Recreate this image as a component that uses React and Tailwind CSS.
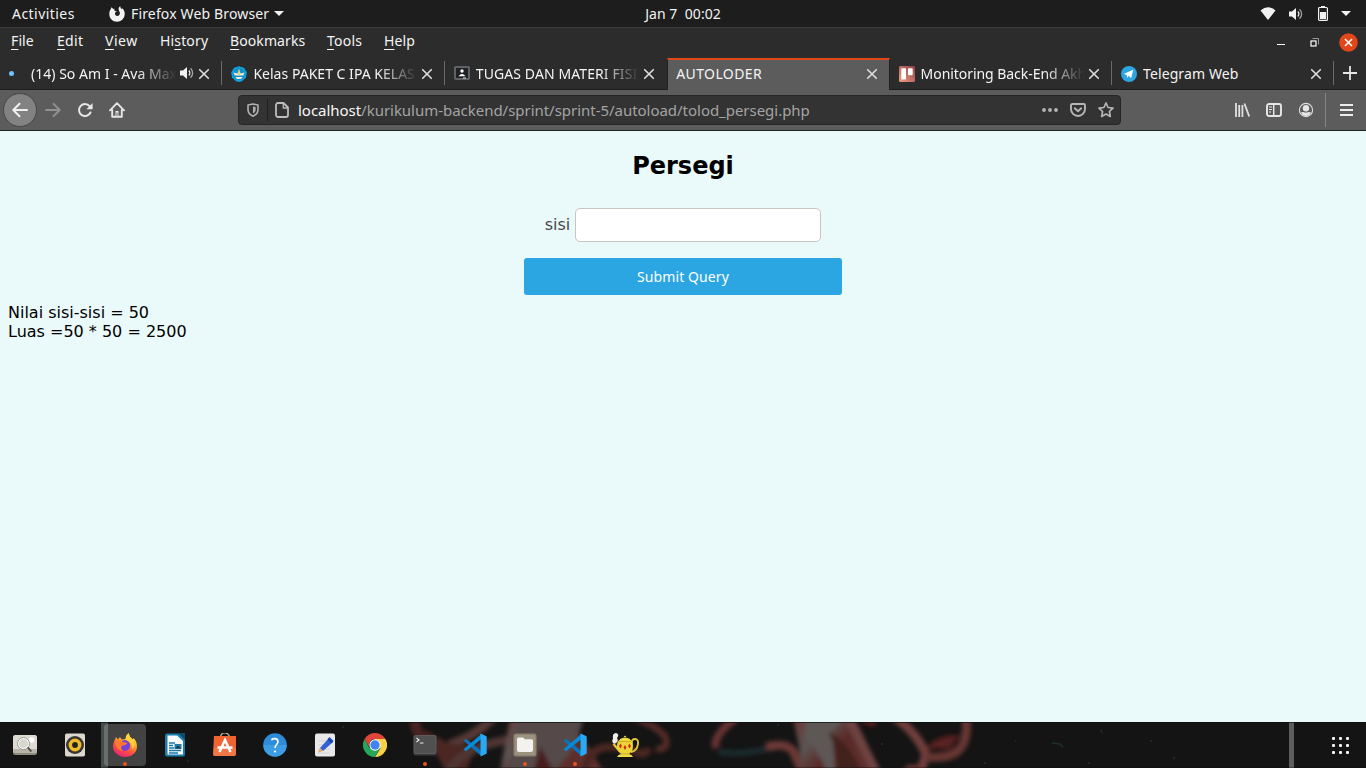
import React from "react";

function Close({ className = "" }) {
  return (
    <svg viewBox="0 0 12 12" className={"h-3 w-3 shrink-0 " + className} stroke="#dedede" strokeWidth="1.6" strokeLinecap="round">
      <path d="M1.7 1.7 10.3 10.3M10.3 1.7 1.7 10.3" />
    </svg>
  );
}

function Speaker({ className }) {
  return (
    <svg viewBox="0 0 16 16" className={className} fill="none" stroke="#e8e8e8">
      <path d="M1 5.500h3L8 2v12l-4-3.500H1z" fill="#f2f2f2" stroke="none" />
      <path d="M9.800 5.500a3.500 3.500 0 0 1 0 5" strokeWidth="1.300" />
      <path d="M11.500 3.200a6.500 6.500 0 0 1 0 9.600" strokeWidth="1.300" opacity=".65" />
    </svg>
  );
}

function TopBar() {
  return (
    <div className="grid h-7 grid-cols-3 items-center border-b border-[#3a3a3a] bg-[#1d1d1d] text-[14px] text-[#f2f2f2]">
      <div className="flex items-center pl-3">
        <span className="w-[97px] tracking-[0.45px]">Activities</span>
        <svg viewBox="0 0 16 16" className="mr-[6px] h-4 w-4">
          <path d="M2.300 1.200 4.400 3l1.300-.2C5 4 5.300 4.700 6 5.100l2 .5-1.900 1C5.600 8.700 6.700 10 8.200 10c1.700 0 2.800-1.300 2.700-2.900C10.800 5.500 9.700 4.900 9.600 3.200 9.600 2 10.200.9 11.200.300c.1 1.400 1 2.200 1.800 3 .1-.5 0-.8-.1-1.200C14.800 3.700 16 5.900 15.700 8.500 15.300 12.700 12.200 15.700 8 15.700 3.600 15.700.400 12.500.300 8.200.300 5.900 1 4.100 2 2.800z" fill="#f2f2f2" />
        </svg>
        <span className="whitespace-nowrap tracking-[0.15px]">Firefox Web Browser</span>
        <svg viewBox="0 0 10 5" className="ml-[5px] h-[5px] w-[10px]"><path d="M0 0h10L5 5z" fill="#f2f2f2" /></svg>
      </div>
      <div className="whitespace-pre text-center tracking-[0.05px]">Jan 7  00:02</div>
      <div className="flex items-center justify-end pr-[15px]">
        <svg viewBox="0 0 16 13" className="mr-3 h-[13px] w-4"><path d="M.5 3.500Q8-3 15.500 3.500L8 13z" fill="#f2f2f2" /></svg>
        <Speaker className="mr-[14px] h-4 w-4" />
        <svg viewBox="0 0 10 15" className="mr-[13px] h-[15px] w-[10px]">
          <path d="M3 0h4v1H3z" fill="#f2f2f2" />
          <rect x=".6" y="1.500" width="8.800" height="12.900" rx="1" fill="none" stroke="#f2f2f2" strokeWidth="1.200" />
          <path d="M2 6h6v7H2z" fill="#f2f2f2" />
        </svg>
        <svg viewBox="0 0 10 5" className="h-[5px] w-[10px]"><path d="M0 0h10L5 5z" fill="#f2f2f2" /></svg>
      </div>
    </div>
  );
}

const menus = [
  ["", "F", "ile", "w-[46px] tracking-[0.1px]"],
  ["", "E", "dit", "w-[48px] tracking-[0.3px]"],
  ["", "V", "iew", "w-[55px] tracking-[0.5px]"],
  ["Hi", "s", "tory", "w-[70px] tracking-[0.15px]"],
  ["", "B", "ookmarks", "w-[97px] tracking-[0.1px]"],
  ["", "T", "ools", "w-[57px] tracking-[0.25px]"],
  ["", "H", "elp", "w-[50px] tracking-[0.1px]"],
];

function MenuBar() {
  return (
    <div className="flex h-[29px] items-center pl-[11px] text-[14px] leading-5 text-[#f4f4f4]">
      {menus.map(([a, b, c, cls]) => (
        <span key={b + c} className={"-mt-[3px] shrink-0 " + cls}>
          {a}<span className="underline decoration-1 underline-offset-[3px]">{b}</span>{c}
        </span>
      ))}
      <div className="ml-auto flex items-center pr-2">
        <div className="mr-[25px] mt-1 h-px w-2 bg-white" />
        <svg viewBox="0 0 9 9" className="mr-[20px] h-[9px] w-[9px]" fill="none">
          <path d="M2.500 .5H8.500V6.500" stroke="#9b9b9b" />
          <rect x="1" y="3" width="5" height="5" stroke="#fff" strokeWidth="1.200" />
        </svg>
        <svg viewBox="0 0 19 19" className="h-[19px] w-[19px]">
          <circle cx="9.500" cy="9.500" r="9.300" fill="#e2471a" />
          <path d="m6 6 7 7M13 6l-7 7" stroke="#fff" strokeWidth="1.500" />
        </svg>
      </div>
    </div>
  );
}

const TabIcons = {
  kelas: (
    <svg viewBox="0 0 16 16" className="mt-px h-4 w-4 shrink-0">
      <path d="M8 .2 13 1.800 15.800 6.200 15 11.500 11 15.200 8 16 5 15.200 1 11.500.2 6.200 3 1.800z" fill="#12a0dc" />
      <circle cx="8" cy="8" r="6" fill="#0a91cf" />
      <path d="M2.500 6.500 6.300 7.500l1.700-3 1.700 3 3.800-1-1.200 3H3.700zM4.300 11h7.400L10 13H6z" fill="#f3ead1" />
      <path d="M7.300 3.500h1.400v6H7.300z" fill="#e6ca54" />
    </svg>
  ),
  tugas: (
    <svg viewBox="0 0 16 14" className="h-[14px] w-4 shrink-0">
      <rect x="1" y="1" width="14" height="12" rx=".7" fill="#202124" stroke="#5f6368" strokeWidth="2" />
      <circle cx="8" cy="5" r="1.700" fill="#fff" /><path d="M4.500 10.200Q8 6 11.500 10.200z" fill="#fff" />
      <path d="M9 11.500h3v1H9z" fill="#ddd" />
    </svg>
  ),
  trello: (
    <svg viewBox="0 0 16 16" className="mt-px h-4 w-4 shrink-0">
      <defs><linearGradient id="tr" x1="0" y1="1" x2="1" y2="0"><stop stopColor="#ef9c80" /><stop offset=".55" stopColor="#bd6a62" /><stop offset="1" stopColor="#933d43" /></linearGradient></defs>
      <rect width="16" height="16" rx="1.500" fill="url(#tr)" />
      <rect x="2.300" y="2.300" width="4.700" height="11.200" rx=".8" fill="#fff" /><rect x="9" y="2.300" width="4.700" height="7" rx=".8" fill="#fff" />
    </svg>
  ),
  telegram: (
    <svg viewBox="0 0 16 16" className="mt-px h-4 w-4 shrink-0">
      <circle cx="8" cy="8" r="8" fill="#2ca5e0" />
      <path d="m3 7.700 9.300-3.900-2.200 8.500-2.500-2.500-1.700 2.100-.1-2.700z" fill="#fff" />
    </svg>
  ),
};

function Tab({ icon, title, sound, active, sep = true, track }) {
  const fade = title.length > 13 ? " [mask-image:linear-gradient(to_right,#000_calc(100%-40px),transparent)]" : "";
  return (
    <div className={"flex h-full w-[222.4px] shrink-0 items-center text-[14px] text-[#f4f4f4] " + (active ? "-mb-px h-[33px] border-x border-t-2 border-x-[#222] border-t-[#e2471a] bg-[#5c5c5c] pb-[2px] pl-2" : "pl-[9px]")}>
      {icon}
      <span className={"min-w-0 flex-1 overflow-hidden whitespace-nowrap " + (icon ? "ml-[6px] " : "") + track + fade}>{title}</span>
      {sound && <Speaker className="ml-[2px] h-4 w-4 shrink-0" />}
      <Close className={active ? "mr-[10px]" : "ml-[3px] mr-[11px] mt-px"} />
      <div className={"h-6 w-px shrink-0 " + (sep ? "bg-[#6a6a6a]" : "bg-transparent")} />
    </div>
  );
}

function TabBar() {
  return (
    <div className="flex h-[33px] items-center border-b border-[#1d1d1d]">
      <Tab icon={<div className="mr-[11px] h-[5px] w-[5px] shrink-0 rounded-full bg-[#75bfff]" />} title="(14) So Am I - Ava Max" sound track="tracking-[0.02px]" />
      <Tab icon={TabIcons.kelas} title="Kelas PAKET C IPA KELAS" track="tracking-[0.02px]" />
      <Tab icon={TabIcons.tugas} title="TUGAS DAN MATERI FISI" sep={false} track="tracking-[0.1px]" />
      <Tab title="AUTOLODER" active sep={false} track="tracking-[0.4px]" />
      <Tab icon={TabIcons.trello} title="Monitoring Back-End Akh" track="tracking-[-0.05px]" />
      <Tab icon={TabIcons.telegram} title="Telegram Web" track="tracking-[0.12px]" />
      <svg viewBox="0 0 14 14" className="ml-[9px] h-[14px] w-[14px] shrink-0"><path d="M7 0v14M0 7h14" stroke="#e6e6e6" strokeWidth="1.800" /></svg>
    </div>
  );
}

function ToolBar() {
  return (
    <div className="flex h-[41px] items-center border-b border-[#222] bg-[#5c5c5c]">
      <div className="ml-[3px] flex h-[34px] w-[34px] items-center justify-center rounded-full border border-[#474747] bg-[#828282]">
        <svg viewBox="0 0 16 16" className="h-4 w-4" fill="none" stroke="#f0f0f0" strokeWidth="2" strokeLinecap="round" strokeLinejoin="round"><path d="M15 8H1.500M7.500 1.800 1.300 8l6.200 6.200" /></svg>
      </div>
      <svg viewBox="0 0 16 16" className="ml-2 h-4 w-4" fill="none" stroke="#929292" strokeWidth="1.900" strokeLinecap="round" strokeLinejoin="round"><path d="M1 8h13.500M8.500 1.800 14.700 8l-6.200 6.200" /></svg>
      <svg viewBox="0 0 16 16" className="ml-4 h-4 w-4" fill="none" stroke="#e6e6e6" strokeWidth="2"><path d="M13.500 10.500A6 6 0 1 1 12.600 4.200L14 5.800" strokeLinecap="round" /><path d="M15.600 1v6.200H9.400z" fill="#e6e6e6" stroke="none" /></svg>
      <svg viewBox="0 0 16 16" className="ml-4 h-4 w-4" fill="none" stroke="#e6e6e6" strokeWidth="1.900" strokeLinecap="round" strokeLinejoin="round"><path d="M1 8.300 8 1.200l7 7.100M3.200 8v6.800h9.600V8" /><path d="M6.500 14.500V9h3v5.500z" fill="#e6e6e6" stroke="none" /><path d="M8 11v2.500" stroke="#5c5c5c" strokeWidth="1" /></svg>

      <div className="ml-[113px] flex h-[30px] w-[883px] items-center rounded-[4px] border border-[#252525] bg-[#333]">
        <svg viewBox="0 0 12 14" className="ml-2 h-[14px] w-3" fill="none"><path d="M6 1 11 2v4.500c0 3.200-1.800 5.300-5 6.700-3.200-1.400-5-3.500-5-6.700V2z" stroke="#b0b0b0" strokeWidth="1.600" strokeLinejoin="round" /><path d="M6 3.700v6.700c-1.800-1-2.600-2.200-2.600-4V4.200z" fill="#333" /><path d="M6 3.500v7c1.800-1 2.600-2.200 2.600-4V4z" fill="#b0b0b0" /></svg>
        <div className="ml-2 h-[22px] w-px bg-[#1f1f1f]" />
        <svg viewBox="0 0 14 16" className="ml-[7px] h-4 w-[14px]" fill="none" stroke="#bdbdbd" strokeWidth="1.800" strokeLinejoin="round"><path d="M3 1h5.500L13 5.500V13a2 2 0 0 1-2 2H3a2 2 0 0 1-2-2V3a2 2 0 0 1 2-2z" /><path d="M8.300 1.300V6H13" strokeWidth="1.300" /></svg>
        <span className="ml-[9px] whitespace-nowrap text-[15px] tracking-[-0.03px] text-[#a4a4a4]"><span className="text-[#f8f8f8]">localhost</span>/kurikulum-backend/sprint/sprint-5/autoload/tolod_persegi.php</span>
        <div className="ml-auto flex items-center pr-[6px]">
          <svg viewBox="0 0 16 4" className="h-1 w-4" fill="#b6b6b6"><circle cx="2" cy="2" r="1.900" /><circle cx="8" cy="2" r="1.900" /><circle cx="14" cy="2" r="1.900" /></svg>
          <svg viewBox="0 0 16 14" className="ml-3 h-[14px] w-4" fill="none" stroke="#b6b6b6" strokeWidth="1.900" strokeLinejoin="round" strokeLinecap="round"><path d="M2.200 1h11.600c.7 0 1.200.5 1.200 1.200V6a7 7 0 0 1-14 0V2.200C1 1.500 1.500 1 2.200 1z" /><path d="m4.800 5.300 3.200 3 3.200-3" /></svg>
          <svg viewBox="0 0 16 16" className="ml-3 h-4 w-4" fill="none" stroke="#b6b6b6" strokeWidth="1.700" strokeLinejoin="round"><path d="m8 1 2.100 4.500 4.900.6-3.600 3.400.9 5L8 12.100l-4.300 2.400.9-5L1 6.100l4.900-.6z" /></svg>
        </div>
      </div>

      <div className="ml-auto flex items-center pr-[13px]">
        <svg viewBox="0 0 16 14" className="h-[14px] w-4" stroke="#e0e0e0" strokeWidth="1.800"><path d="M2 0v14M5.200 2v12M8.400 2v12M10.400 .5 15.200 13.500" /></svg>
        <svg viewBox="0 0 16 14" className="ml-4 h-[14px] w-4" fill="none" stroke="#e6e6e6"><rect x="1" y="1" width="14" height="12" rx="2" strokeWidth="1.900" /><path d="M7.700 1v12" strokeWidth="1.500" /><path d="M3 4h3M3 6.500h3M3 9h2" /></svg>
        <svg viewBox="0 0 16 16" className="ml-4 h-4 w-4"><circle cx="8" cy="8" r="6.600" fill="none" stroke="#dedede" strokeWidth="1.100" /><circle cx="8" cy="6.200" r="3.200" fill="#e6e6e6" /><path d="M3 10.500c2.300-1.400 2.400 0 5 0s2.700-1.400 5 0C12 13 10.400 14 8 14s-4-1-5-3.500z" fill="#e6e6e6" /></svg>
        <div className="ml-[11px] h-[34px] w-px bg-[#858585]" />
        <svg viewBox="0 0 13 12" className="ml-[14px] h-3 w-[13px]" stroke="#ececec" strokeWidth="2"><path d="M0 1h13M0 6h13M0 11h13" /></svg>
      </div>
    </div>
  );
}

function Page() {
  return (
    <main className="flex h-[591px] flex-col items-center bg-[#eaf9fa] font-['DejaVu_Sans',sans-serif] text-[16px] text-black">
      <h2 className="mt-[21px] text-2xl font-bold leading-7">Persegi</h2>
      <div className="mt-[28px] flex items-center">
        <label className="mr-[5px] text-[#484848]">sisi</label>
        <input className="h-[34px] w-[246px] rounded-[5px] border border-[#c8c4c0] bg-white outline-none" />
      </div>
      <button className="mt-4 h-[37px] w-[318px] rounded-[3px] bg-[#2ba6e3] font-['Noto_Sans',sans-serif] text-[14px] tracking-[0.1px] text-white">Submit Query</button>
      <div className="mt-[9px] self-start pl-2 leading-[18.5px]">
        <p>Nilai sisi-sisi = 50</p>
        <p>Luas =50 * 50 = 2500</p>
      </div>
    </main>
  );
}

function Wallpaper() {
  return (
    <svg viewBox="0 0 1366 46" className="absolute inset-0 h-full w-full" fill="none">
      <defs>
        <filter id="soft" filterUnits="userSpaceOnUse" x="0" y="-20" width="1366" height="90"><feGaussianBlur stdDeviation="2" /></filter>
        <linearGradient id="flesh" x1="0" y1="0" x2="1" y2=".6"><stop stopColor="#6b3634" /><stop offset=".35" stopColor="#5b5452" /><stop offset=".6" stopColor="#5a2b28" /><stop offset="1" stopColor="#5f2f2d" /></linearGradient>
      </defs>
      <g filter="url(#soft)">
        <path d="M736-4Q712 14 716 26" stroke="#663331" strokeWidth="8" />
        <path d="M718 30q24 3 48-3" stroke="#1a2c2e" strokeWidth="6" />
        <path d="M766 25q20-5 27 4l10 22" stroke="#6b3836" strokeWidth="9" />
        <path d="M793-4h62l26 54h-79l-3-26z" fill="url(#flesh)" />
        <path d="M806-4h38l-12 14 3 40h-8q-9-24-22-33z" fill="#5d5856" />
        <path d="M828 10q20 8 34 40h-26q2-24-8-40z" fill="#43201e" />
        <path d="M848-4q10 18 28 54" stroke="#6d4240" strokeWidth="9" />
        <path d="M864-3l12 4" stroke="#5a1d1a" strokeWidth="9" />
        <path d="M928 26q8-12 30-12l-8 12z" fill="#5a2421" stroke="#4b1c1a" strokeWidth="3" />
        <path d="M895-5q22 16 31 37-2 8-6 18" stroke="#6f3c3a" strokeWidth="9" />
        <path d="M926 35c24 2 44-2 40-40" stroke="#663533" strokeWidth="9" />
        <path d="M908 43h14v7h-22z" fill="#6a3533" />

        <path d="M415-4q-1 18 14 22 15 12 22 32" stroke="#4b2422" strokeWidth="10" />
        <path d="M494-5q-20 20-45 28" stroke="#553735" strokeWidth="9" />
        <path d="M425 8 450 22l26 2-10 26h-20z" fill="#4b2523" />
        <path d="M448 50q16-26 60-32" stroke="#503432" strokeWidth="9" />
        <path d="M510-4h60l34 54h-104z" fill="url(#flesh)" />
        <path d="M516-4h68l-10 30-20 24h-44z" fill="#544a48" />
        <path d="M540 24l14 26h-20z" fill="#4a1e1c" />
        <path d="M584 50q6-25 24-25t28 5 12-4" stroke="#4c2523" strokeWidth="8" />
        <path d="M636-4q28 12 30 22t-10 9" stroke="#532927" strokeWidth="7" />
      </g>
      <path d="M342 5h2M187 39h2M778 2v2M881 22h2M1052 21l8 1 3 3M1088 41h2M1101 8l1 3M1150 19h2M1173 36h2M984 41h2M1015 19h1" stroke="#203638" strokeWidth="1.5" opacity=".8" />
      <path d="M101 0h7v46h-7z" fill="#444b4b" />
      <path d="M1289 0h5v46h-5z" fill="#5c5e5e" />
      <path d="M0 0h1366v1H0zM0 45.500h1366v.500H0z" fill="#0e0e10" opacity=".7" />
    </svg>
  );
}

function CodeLogo() {
  return (
    <svg viewBox="0 0 24 24" className="h-6 w-6">
      <path d="M.6 7.800 2.300 6.300q.6-.4 1.200 0L18 17.500v5.300z" fill="#0874bd" />
      <path d="M.6 16.200 2.300 17.700q.6.4 1.200 0L18 6.500V1.200z" fill="#078bd6" />
      <path d="m17.500.500 5.500 2.500q.7.400.7 1v16q0 .7-.7 1l-5.500 2.500z" fill="#29a9f2" />
    </svg>
  );
}

const apps = [
  <svg viewBox="0 0 24 24" className="h-6 w-6"><rect y="2" width="24" height="20" rx="2.500" fill="#8f8a7e" /><rect y="2" width="24" height="17.500" rx="2.500" fill="#dedbd3" /><path d="M0 16h24v3.500H0z" fill="#b9b4a7" /><circle cx="18.500" cy="7" r="2.800" fill="#fff" /><circle cx="10.500" cy="10.500" r="5.300" fill="#d8d6cf" stroke="#fff" strokeWidth="1.300" /><circle cx="10.500" cy="10.500" r="6" fill="none" stroke="#777" strokeWidth=".7" /><path d="m14.800 14.500 3.500 4" stroke="#444" strokeWidth="1.800" /></svg>,
  <svg viewBox="0 0 24 24" className="h-6 w-6"><rect x="2" y=".5" width="20" height="23" rx="1.800" fill="#ddd8cf" /><circle cx="12" cy="12" r="9" fill="#363533" /><circle cx="12" cy="12" r="4.700" fill="none" stroke="#efb927" strokeWidth="3.600" /><circle cx="12" cy="12" r="2.500" fill="#222" /></svg>,
  <svg viewBox="0 0 24 24" className="h-6 w-6"><defs><linearGradient id="fx" x1=".8" y1="0" x2=".3" y2="1"><stop stopColor="#fff14f" /><stop offset=".35" stopColor="#ffb52b" /><stop offset=".65" stopColor="#ff553c" /><stop offset="1" stopColor="#e92178" /></linearGradient></defs><path d="M2 6.500 3 4l2 2.500 2-2.500 1.500 2.500 4-.5Q13 2 15.500 0q1 4 4 6 1 .500 1-1 3.500 3.500 3.500 8.500C24 20 18 24 12 24S0 19.500 0 13.500c0-3 1-5 2-7z" fill="url(#fx)" /><circle cx="11.800" cy="12.500" r="5.400" fill="#7542d6" /><path d="M3 8q4-2 7 1l4.500 1q-2 2.500-5 2.500c-2 1-2 3.500 1 5-5 1-9-4-7.500-9.500z" fill="#ff7a2f" /><path d="M12.500 6.500q.500-4.500 3-6 1 4 4 6.500 3 5 0 9.500.500-8-7-10z" fill="#ffd43b" /></svg>,
  <svg viewBox="0 0 24 24" className="h-6 w-6"><path d="M4 .5h12l6 6v15a2 2 0 0 1-2 2H4a2 2 0 0 1-2-2v-19a2 2 0 0 1 2-2z" fill="#1b7dae" /><path d="M4.500 2.500H14L20 8v13.500H4.500z" fill="#f8fafa" /><path d="M15 0h7v7z" fill="#0d4c6e" /><path d="M6 10h6M6 12.500h4M6 15h5M6 17.500h12M6 20h9" stroke="#1679a9" strokeWidth="1.300" /><path d="M11.500 11h7v5h-7z" fill="#207ca8" /><path d="m12 15.500 3-3 3 3z" fill="#193a4a" /></svg>,
  <svg viewBox="0 0 24 24" className="h-6 w-6"><path d="M7 5Q8-.5 12-.200T17 5" fill="none" stroke="#c9ad82" strokeWidth="1.300" /><path d="M1 3h22v18a2 2 0 0 1-2 2H2a2 2 0 0 1-2-2z" fill="#ef6431" /><path d="M1 15h22v6q0 2-2 2H2q-2 0-2-2z" fill="#f48357" opacity=".6" /><path d="m6.500 19 5.500-12 5.500 12M4.500 14.500h15" fill="none" stroke="#fff" strokeWidth="2.500" /></svg>,
  <svg viewBox="0 0 24 24" className="h-6 w-6"><circle cx="12" cy="12" r="11.800" fill="#2e8dd8" /><path d="M.2 12h23.600a11.800 11.800 0 0 1-23.600 0" fill="#47a9e9" opacity=".6" /><path d="M8.500 7.200C9.300 5 14.800 4.800 15 8.500c0 3-3 3-3 6.500" fill="none" stroke="#fff" strokeWidth="1.600" /><circle cx="12" cy="18.500" r="1.100" fill="#fff" /></svg>,
  <svg viewBox="0 0 24 24" className="h-6 w-6"><rect x="2" y=".5" width="20" height="23" rx="2" fill="#e9e9e9" /><path d="M5 8h12M5 12h12M5 16h12M5 20h12" stroke="#c8c8c8" strokeWidth=".6" /><path d="m7 15 9-10 4 4-10 9z" fill="#2f62d5" /><path d="m7 15-2 4.500 5-1.500z" fill="#e9a65d" /><path d="m14.500 6.500 2-2.500 4 4-2 2.500z" fill="#1746af" /></svg>,
  <svg viewBox="0 0 24 24" className="h-6 w-6"><path d="M12 12V6h10.400A12 12 0 0 1 12 24l5.500-9z" fill="#fbd049" /><path d="M12 12 6.500 15 1.600 6A12 12 0 0 0 12 24l5.200-9z" fill="#26a65a" /><path d="M1.600 6 6.800 15A6 6 0 0 1 12 6H22.400A12 12 0 0 0 1.600 6z" fill="#df4538" /><circle cx="12" cy="12" r="5.700" fill="#fff" /><circle cx="12" cy="12" r="4.700" fill="#4184ee" /></svg>,
  <svg viewBox="0 0 24 24" className="h-6 w-6"><rect x=".5" y="2" width="23" height="20.500" rx="2" fill="#3b3b3b" /><rect x="1" y="2.500" width="22" height="18" rx="1.500" fill="#505050" stroke="#696969" strokeWidth=".6" /><path d="m3.500 5 2.500 2-2.500 2M7 10h3.500" fill="none" stroke="#ececec" strokeWidth="1.100" /></svg>,
  <CodeLogo />,
  <svg viewBox="0 0 24 24" className="h-6 w-6"><rect x=".5" y=".5" width="23" height="23" rx="2.500" fill="#8d8370" /><rect x="2" y="2" width="20" height="20" rx="1.500" fill="#9c937f" /><path d="M4 6q0-1.500 1.500-1.500H10L12 6.300h6.500Q20 6.300 20 8v9q0 2-2 2H6q-2 0-2-2z" fill="#f4f2ef" /></svg>,
  <CodeLogo />,
  <svg viewBox="0 0 28 26" className="h-[26px] w-7">
    <path d="M3 12q-3-3-1-5-1-6 3-6 4 1 1 5 2 3-1 5z" fill="#eeeee7" />
    <path d="m2.500 12 6 7" fill="none" stroke="#e6cd3a" strokeWidth="2.200" />
    <path d="M20.500 12q0-5 3.500-5t3 5q-1 7-7 8" fill="none" stroke="#dfc63d" strokeWidth="1.800" />
    <path d="M6 14q0-5 3-6.500h10q3 1.500 3 6.500 0 6-5 8.500H11Q6 20 6 14z" fill="#ecd336" />
    <path d="M9 7q5-3 10 0v1.500H9zM12.500 5h3L14 3.500zM6 25q1-2.500 4-3h8q3 .5 4 3z" fill="#f0dc45" />
    <path d="M8 9.500h12M9 22h10" stroke="#bd981c" strokeWidth=".7" />
    <path d="m9.500 11.500 1.500 2.500-1.500 2.500L8 14zM14 13l1.500 2.500L14 18l-1.500-2.500zM18.500 11.500 20 14l-1.500 2.500L17 14z" fill="#ce2b22" />
  </svg>,
];

function Dock() {
  return (
    <footer className="relative h-[46px] overflow-hidden bg-[#141414]">
      <Wallpaper />
      <div className="relative flex h-full items-center">
        {apps.map((app, i) => (
          <div key={i} className="flex h-full w-[50px] shrink-0 items-center justify-center">
            <div className={"relative flex h-[42px] w-[42px] items-center justify-center rounded-[4px] " + (i === 2 ? "bg-white/20" : "")}>
              {app}
              {[2, 8, 10, 11].includes(i) && <i className="absolute bottom-0 left-[19px] h-1 w-1 rounded-full bg-[#e95420]" />}
            </div>
          </div>
        ))}
        <div className="ml-auto mr-[17px] grid grid-cols-3 gap-[4px]">
          {Array.from({ length: 9 }, (_, i) => <i key={i} className="h-[3px] w-[3px] rounded-[1px] bg-[#f5f5f5]" />)}
        </div>
      </div>
    </footer>
  );
}

export default function App() {
  return (
    <div className="h-[768px] w-[1366px] overflow-hidden bg-[#2c2c2c] font-['Noto_Sans',sans-serif]">
      <TopBar />
      <MenuBar />
      <TabBar />
      <ToolBar />
      <Page />
      <Dock />
    </div>
  );
}
